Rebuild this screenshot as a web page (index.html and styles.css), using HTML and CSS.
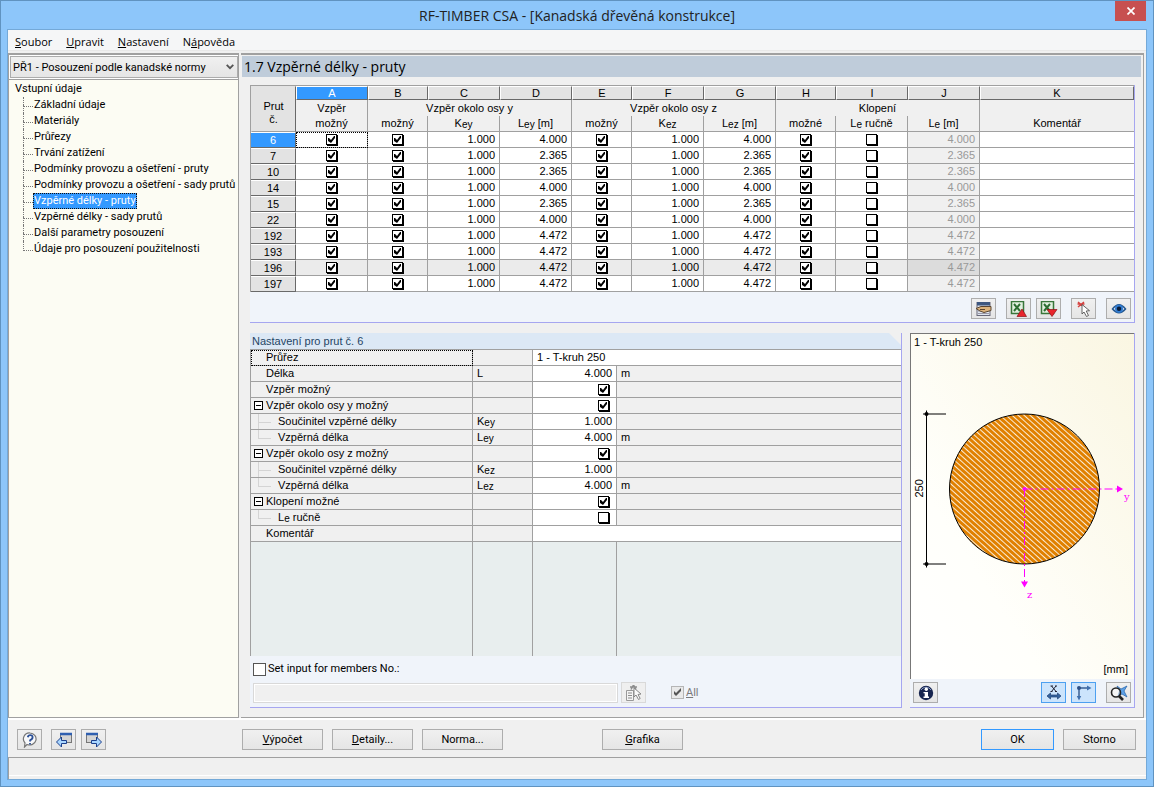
FILE: index.html
```html
<!DOCTYPE html>
<html lang="cs">
<head>
<meta charset="utf-8">
<title>RF-TIMBER CSA - [Kanadská dřevěná konstrukce]</title>
<link rel="stylesheet" href="styles.css">
</head>
<body>
<div class="window">
  <header class="titlebar">
    <h1 class="titlebar-text">RF-TIMBER CSA - [Kanadská dřevěná konstrukce]</h1>
    <button class="close" aria-label="Zavřít"><svg width="8" height="8" viewBox="0 0 8 8"><path d="M.5.5l7 7M7.5.5l-7 7" stroke="#fff" stroke-width="1.7"/></svg></button>
  </header>
  <div class="client">
    <nav class="menubar">
      <button class="menu-item"><u>S</u>oubor</button>
      <button class="menu-item"><u>U</u>pravit</button>
      <button class="menu-item"><u>N</u>astavení</button>
      <button class="menu-item">N<u>á</u>pověda</button>
    </nav>
    <div class="workspace">
      <aside class="sidebar">
        <div class="case-picker">
          <select class="case-select" aria-label="Případ"><option>PŘ1 - Posouzení podle kanadské normy</option></select>
          <svg class="case-arrow" width="8" height="6" viewBox="0 0 8 6"><path d="M.7.8L4 4.2 7.3.8" fill="none" stroke="#555" stroke-width="1.8"/></svg>
        </div>
        <div class="tree">
          <div class="tree-root">Vstupní údaje</div>
          <ul class="tree-list">
            <li><a href="#">Základní údaje</a></li>
            <li><a href="#">Materiály</a></li>
            <li><a href="#">Průřezy</a></li>
            <li><a href="#">Trvání zatížení</a></li>
            <li><a href="#">Podmínky provozu a ošetření - pruty</a></li>
            <li><a href="#">Podmínky provozu a ošetření - sady prutů</a></li>
            <li><a href="#" class="selected">Vzpěrné délky - pruty</a></li>
            <li><a href="#">Vzpěrné délky - sady prutů</a></li>
            <li><a href="#">Další parametry posouzení</a></li>
            <li><a href="#">Údaje pro posouzení použitelnosti</a></li>
          </ul>
        </div>
      </aside>
      <main class="main">
        <h2 class="heading">1.7 Vzpěrné délky - pruty</h2>
        <div class="content">
          <section class="panel">
            <table class="grid">
              <colgroup>
                <col class="c-no"><col class="c-72"><col class="c-60"><col class="c-72"><col class="c-72"><col class="c-60"><col class="c-72"><col class="c-72"><col class="c-60"><col class="c-72"><col class="c-72"><col>
              </colgroup>
              <thead>
                <tr class="letters">
                  <th rowspan="3" class="corner">Prut<br>č.</th>
                  <th class="active">A</th><th>B</th><th>C</th><th>D</th><th>E</th><th>F</th><th>G</th><th>H</th><th>I</th><th>J</th><th>K</th>
                </tr>
                <tr class="groups">
                  <th>Vzpěr</th><th colspan="3">Vzpěr okolo osy y</th><th colspan="3">Vzpěr okolo osy z</th><th colspan="3">Klopení</th><th></th>
                </tr>
                <tr class="names">
                  <th>možný</th>
                  <th>možný</th><th>K<small>ey</small></th><th>L<small>ey</small> [m]</th>
                  <th>možný</th><th>K<small>ez</small></th><th>L<small>ez</small> [m]</th>
                  <th>možné</th><th>L<small>e</small> ručně</th><th>L<small>e</small> [m]</th>
                  <th>Komentář</th>
                </tr>
              </thead>
              <tbody id="members"></tbody>
            </table>
            <div class="strip tools">
              <button class="icon-btn" aria-label="Upravit"><svg width="18" height="16" viewBox="0 0 18 16"><rect x="2" y="1.500" width="13" height="13" fill="#dfe5ee" stroke="#667"/><rect x="2" y="1" width="13" height="3.500" fill="#3d5780"/><path d="M3 12.500h11M3 10h3" stroke="#99a"/><path d="M1 7.500l5-2 10 0v4l-7 2-4-1.500z" fill="#dcb37c" stroke="#5a4530" stroke-width="1"/><path d="M5 8.500h5" stroke="#5a4530"/></svg></button>
              <button class="icon-btn gap-m" aria-label="Export do Excelu"><svg width="18" height="16" viewBox="0 0 18 16"><rect x="1.500" y=".5" width="12" height="12" fill="#e2f0df" stroke="#39763a" stroke-width="1.500"/><path d="M4 3l6 7M10 3l-6 7" stroke="#2d6e32" stroke-width="2"/><path d="M7 15.500L12 8l4.500 7.500z" fill="#e8242b" stroke="#8d1016" stroke-width=".7"/></svg></button>
              <button class="icon-btn gap-s" aria-label="Import z Excelu"><svg width="18" height="16" viewBox="0 0 18 16"><rect x="1.500" y=".5" width="12" height="12" fill="#e2f0df" stroke="#39763a" stroke-width="1.500"/><path d="M4 3l6 7M10 3l-6 7" stroke="#2d6e32" stroke-width="2"/><path d="M7 8.500h10L12 15.500z" fill="#e8242b" stroke="#8d1016" stroke-width=".7"/></svg></button>
              <button class="icon-btn gap-m" aria-label="Vybrat v grafice"><svg width="16" height="16" viewBox="0 0 16 16"><path d="M2 1l6 5M8 1L2 6M1.500 3h7" stroke="#d6413f" stroke-width="1.500"/><path d="M6 3.500v9.500l2-2 2.500 4.500 2-1-2.300-4.500 3.300-.3z" fill="#fff" stroke="#555" stroke-width=".9"/></svg></button>
              <button class="icon-btn gap-m" aria-label="Zobrazit"><svg width="16" height="12" viewBox="0 0 16 12"><path d="M1.500 6q6.500-8.500 13 0-6.500 7.500-13 0z" fill="#dce8f6" stroke="#24578f" stroke-width="1.500"/><circle cx="8" cy="5.800" r="4" fill="#2f7ad0"/><circle cx="8" cy="5.800" r="2.200" fill="#0b1d38"/></svg></button>
            </div>
          </section>
          <div class="lower">
            <section class="panel details">
              <h3 class="caption">Nastavení pro prut č. 6</h3>
              <table class="props">
                <colgroup><col class="p-name"><col class="p-sym"><col class="p-val"><col></colgroup>
                <tbody>
                  <tr><th class="focus">Průřez</th><td></td><td colspan="2" class="w">1 - T-kruh 250</td></tr>
                  <tr><th>Délka</th><td>L</td><td class="w num">4.000</td><td>m</td></tr>
                  <tr><th>Vzpěr možný</th><td></td><td class="w num"><input type="checkbox" class="tick" checked aria-label="Vzpěr možný"></td><td></td></tr>
                  <tr><th><button class="fold" aria-label="Sbalit"></button>Vzpěr okolo osy y možný</th><td></td><td class="w num"><input type="checkbox" class="tick" checked aria-label="Vzpěr okolo osy y možný"></td><td></td></tr>
                  <tr><th class="sub">Součinitel vzpěrné délky</th><td>K<small>ey</small></td><td class="w num">1.000</td><td></td></tr>
                  <tr><th class="sub last">Vzpěrná délka</th><td>L<small>ey</small></td><td class="w num">4.000</td><td>m</td></tr>
                  <tr><th><button class="fold" aria-label="Sbalit"></button>Vzpěr okolo osy z možný</th><td></td><td class="w num"><input type="checkbox" class="tick" checked aria-label="Vzpěr okolo osy z možný"></td><td></td></tr>
                  <tr><th class="sub">Součinitel vzpěrné délky</th><td>K<small>ez</small></td><td class="w num">1.000</td><td></td></tr>
                  <tr><th class="sub last">Vzpěrná délka</th><td>L<small>ez</small></td><td class="w num">4.000</td><td>m</td></tr>
                  <tr><th><button class="fold" aria-label="Sbalit"></button>Klopení možné</th><td></td><td class="w num"><input type="checkbox" class="tick" checked aria-label="Klopení možné"></td><td></td></tr>
                  <tr><th class="sub last">L<small>e</small> ručně</th><td></td><td class="w num"><input type="checkbox" class="tick" aria-label="Le ručně"></td><td></td></tr>
                  <tr><th>Komentář</th><td></td><td colspan="2" class="w"></td></tr>
                </tbody>
              </table>
              <div class="blank"><span class="b-name"></span><span class="b-sym"></span><span class="b-val"></span></div>
              <div class="strip members">
                <label class="check-line"><input type="checkbox" class="box">Set input for members No.:</label>
                <div class="member-row">
                  <input type="text" class="member-input" aria-label="Members No." disabled>
                  <button class="icon-btn dim" aria-label="Vybrat pruty" disabled><svg width="18" height="16" viewBox="0 0 18 16"><path d="M1.500 5.500h7v10h-7z" fill="#f4f4f4" stroke="#999"/><path d="M3 8h4M3 10.500h4M3 13h4" stroke="#8c8c8c"/><path d="M5 2h7M6 4.500L8.500 0 11 4.500" stroke="#8c8c8c" stroke-width="1.500" fill="none"/><path d="M9 3v9l2-2 2.500 4.500 1.700-1-2.200-4 3-.5z" fill="#fafafa" stroke="#888"/></svg></button>
                  <label class="check-line all"><input type="checkbox" class="box" checked disabled><span><u>A</u>ll</span></label>
                </div>
              </div>
            </section>
            <section class="panel preview">
              <div class="picture">
                <div class="picture-title">1 - T-kruh 250</div>
                <svg class="drawing" viewBox="0 0 223 308">
                  <defs><pattern id="hatch" width="4" height="4" patternUnits="userSpaceOnUse" patternTransform="rotate(42)"><rect width="4" height="4" fill="#e08000"/><rect width="4" height="1" fill="#faecd6"/></pattern></defs>
                  <circle cx="113.500" cy="138.500" r="75" fill="url(#hatch)" stroke="#000"/>
                  <path d="M15.500 60v157M12 63.500h23M12 213.500h23" stroke="#000" fill="none" stroke-width="1"/>
                  <circle cx="15.500" cy="63.500" r="2"/><circle cx="15.500" cy="213.500" r="2"/>
                  <text class="dim-text" transform="translate(12 147) rotate(-90)">250</text>
                  <path d="M113.500 138.500h93M113.500 138.500v93" stroke="#f0f" stroke-dasharray="8 3 2 3" fill="none"/>
                  <path d="M206 135l6 3.500-6 3.500zM110 231l3.500 6 3.500-6z" fill="#f0f"/><circle cx="113.500" cy="138.500" r="2" fill="#f0f"/>
                  <text class="axis-text" x="213" y="149">y</text><text class="axis-text" x="116" y="247">z</text>
                </svg>
                <div class="unit">[mm]</div>
              </div>
              <div class="strip tools preview-tools">
                <button class="icon-btn" aria-label="Informace"><svg width="16" height="16" viewBox="0 0 16 16"><circle cx="8" cy="8" r="7.200" fill="#17254f"/><path d="M3 5a6 6 0 0 1 10 0" stroke="#8fa0c8" fill="none"/><circle cx="8.300" cy="4.300" r="1.700" fill="#fff"/><path d="M5.500 7H10v4.500h1V13H5.500v-1.500h1.200V8.300H5.500z" fill="#fff"/></svg></button>
                <span class="spacer"></span>
                <button class="icon-btn on" aria-label="Kóty"><svg width="16" height="16" viewBox="0 0 16 16"><path d="M5.500 1l4.500 5.500M10 1L5.500 6.500M4.500 1h2.500M9 1h2M4.500 6.500h2M9 6.500h2" stroke="#223" stroke-width="1"/><path d="M1 11l3.500-3v2h7V8l3.500 3-3.500 3v-2h-7v2z" fill="#35639f" stroke="#1d3f72" stroke-width=".7"/></svg></button>
                <button class="icon-btn on gap-s" aria-label="Osy"><svg width="16" height="16" viewBox="0 0 16 16"><path d="M3 3h9M3 3v9" stroke="#3a5f92" stroke-width="1.500"/><path d="M11 .5L15.500 3 11 5.500zM.8 11L3 15.500 5.200 11z" fill="#3f6fae"/><circle cx="3" cy="3" r="2" fill="#2c4f86"/></svg></button>
                <button class="icon-btn gap-m" aria-label="Zobrazit vše"><svg width="18" height="16" viewBox="0 0 18 16"><path d="M7 1l4 3 6-3-3 5 3 6-5-3-4 2 1.500-5z" fill="#5da1e6" stroke="#1f5fa8" stroke-width=".7"/><circle cx="6" cy="7.500" r="4.500" fill="#fff" fill-opacity=".5" stroke="#222" stroke-width="1.600"/><path d="M9 11l4 4" stroke="#222" stroke-width="2.600"/></svg></button>
              </div>
            </section>
          </div>
        </div>
      </main>
    </div>
    <footer class="actions">
      <div class="actions-left">
        <button class="icon-btn" aria-label="Nápověda"><svg width="16" height="16" viewBox="0 0 16 16"><path d="M8 1a6.500 6 0 1 1-3 11.500L2.500 15l.5-4A6 6 0 0 1 8 1z" fill="#f7f8fa" stroke="#777" stroke-width="1.200"/><path d="M5.800 5.200q.4-2 2.500-2t2.300 1.800-2.500 3.200v1.300M8 11v1.500" fill="none" stroke="#2b4f96" stroke-width="1.800"/></svg></button>
        <button class="icon-btn gap-m" aria-label="Předchozí"><svg width="18" height="16" viewBox="0 0 18 16"><rect x="5.500" y="1.500" width="11" height="9" fill="#d4d4d4" stroke="#777"/><path d="M5 2h12" stroke="#2f5fb0" stroke-width="2.500"/><path d="M1.500 10l5-5v3.500h5v3h-5V15z" fill="#a9d6ff" stroke="#1b3f8c"/></svg></button>
        <button class="icon-btn gap-s" aria-label="Další"><svg width="18" height="16" viewBox="0 0 18 16"><rect x="1.500" y="1.500" width="11" height="9" fill="#d4d4d4" stroke="#777"/><path d="M1 2h12" stroke="#2f5fb0" stroke-width="2.500"/><path d="M16.500 10l-5-5v3.500h-5v3h5V15z" fill="#a9d6ff" stroke="#1b3f8c"/></svg></button>
      </div>
      <div class="actions-mid">
        <button class="btn"><u>V</u>ýpočet</button>
        <button class="btn"><u>D</u>etaily...</button>
        <button class="btn">Norma...</button>
        <button class="btn far"><u>G</u>rafika</button>
      </div>
      <div class="actions-right">
        <button class="btn short primary">OK</button>
        <button class="btn short">Storno</button>
      </div>
    </footer>
    <div class="statusbar"></div>
  </div>
</div>
<script src="members.js"></script>
</body>
</html>
```
FILE: styles.css
```css
* { box-sizing: border-box; }
body {
  margin: 0;
  font: 11px/16px Roboto, "Open Sans", sans-serif;
  color: #000;
}
button, input, select { font: inherit; color: inherit; }
button { padding: 0; }
small { font-size: 10px; position: relative; top: 1px; }
u { text-underline-offset: 1px; }

.window {
  min-height: 100vh;
  display: flex;
  flex-direction: column;
  padding: 0 7px 7px;
  background: #8dc6fa;
  border: 1px solid #6093c0;
}
.titlebar { display: flex; align-items: flex-start; height: 29px; position: relative; }
.titlebar-text {
  flex: 1;
  margin: 0;
  text-align: center;
  font: 14px/30px "Open Sans", sans-serif;
  color: #222;
}
.close {
  position: absolute;
  right: 0;
  top: 0;
  width: 31px;
  height: 20px;
  border: 0;
  background: #c75050;
}
.close svg { display: block; margin: auto; }
.client {
  flex: 1;
  display: flex;
  flex-direction: column;
  background: #f0f0f0;
  outline: 1px solid #74a9d8;
}
.menubar {
  display: flex;
  gap: 14px;
  height: 21px;
  padding: 0 7px;
  background: #f5f6f7;
  border-bottom: 1px solid #e8e8e8;
}
.menu-item { border: 0; background: none; font: 11px/20px "Open Sans", sans-serif; padding-top: 2px; }

.workspace { flex: 1; display: flex; gap: 2px; margin-top: 2px; border-bottom: 2px solid #fff; padding-right: 2px; }
.sidebar {
  width: 231px;
  display: flex;
  flex-direction: column;
  border: 1px solid #a0a0a0;
  border-top-width: 2px;
  background: #fff;
}
.case-picker { position: relative; margin: 1px 0 0 1px; }
.case-select {
  display: block;
  width: 100%;
  height: 22px;
  padding: 1px 2px 0;
  appearance: none;
  border: 1px solid #acacac;
  border-radius: 0;
  background: linear-gradient(#f0f0f0, #e5e5e5);
}
.case-arrow { position: absolute; right: 4px; top: 8px; }
.tree { flex: 1; margin-top: 1px; padding: 1px 0 0 5px; border-top: 1px solid #a0a0a0; background: #fcfcf3; white-space: nowrap; }
.tree-root { padding-left: 1px; }
.tree-list { list-style: none; margin: 0; padding: 0 0 0 9px; }
.tree-list li { position: relative; height: 16px; padding-left: 10px; }
.tree-list li::before { content: ""; position: absolute; left: 0; top: 0; width: 9px; height: 9px; border: dotted #777; border-width: 0 0 1px 1px; }
.tree-list li:not(:last-child)::after { content: ""; position: absolute; left: 0; top: 8px; height: 8px; border-left: 1px dotted #777; }
.tree-list a { display: inline-block; padding: 0 1px; color: inherit; text-decoration: none; }
.tree-list .selected { background: #3399ff; color: #fff; outline: 1px dotted #111; outline-offset: -1px; }

.main {
  flex: 1;
  min-width: 0;
  display: flex;
  flex-direction: column;
  border: solid #a0a0a0;
  border-width: 2px 1px 1px 0;
}
.heading {
  margin: 1px 2px 0 1px;
  padding: 1px 0 0 2px;
  background: #bfccda;
  font: 14px/20px "Open Sans", sans-serif;
}
.content { flex: 1; display: flex; flex-direction: column; gap: 10px; padding: 8px 8px 9px 9px; }
.panel { border: 1px solid #a6a6f0; border-width: 0 1px 1px 0; }
.grid, .props {
  width: 100%;
  table-layout: fixed;
  border-collapse: separate;
  border-spacing: 0;
  font-family: "Liberation Sans", Arial, sans-serif;
  background: #f0f0f0;
  border-left: 1px solid #a0a0a0;
}
.grid { border-top: 1px solid #a0a0a0; }
.c-no { width: 45px; }
.c-60 { width: 60px; }
.c-72 { width: 72px; }
.grid th, .grid td {
  height: 16px;
  padding: 0 4px;
  font-weight: 400;
  line-height: 15px;
  text-align: center;
  border: solid #a0a0a0;
  border-width: 0 1px 1px 0;
}
.grid tr > :last-child { border-right: 0; }
.grid .letters th {
  height: 14px;
  line-height: 12px;
  background: #e3e3e3;
  border: 1px solid #fff;
  border-right-color: #696969;
  border-bottom-color: #696969;
}
.grid .letters .active { background: #3399ff; color: #fff; }
.grid .letters .corner { padding-top: 8px; line-height: 13px; border-color: #e3e3e3 #696969 #a0a0a0 #e3e3e3; }
.grid .groups th { border-bottom: 0; }
.grid td { background: #fff; }
.grid td.num { text-align: right; }
.grid td:nth-child(11) { background: #f0f0f0; color: #999; }
.grid tbody th {
  background: #e3e3e3;
  border-top: 1px solid #fff;
  border-right-color: #696969;
  border-bottom-color: #696969;
  line-height: 13px;
}
.grid tbody .current th { background: #3399ff; color: #fff; }
.grid .current td:nth-child(2) { outline: 1px dotted #000; outline-offset: -1px; }
.grid .shade td { background: #ebebeb; }
.grid .shade td:nth-child(11) { background: #dcdcdc; }

.tick {
  appearance: none;
  display: block;
  width: 11px;
  height: 11px;
  margin: 0 auto;
  border: 1px solid #000;
  box-shadow: 1px 1px 0 #000;
  background: #fff;
}
.num .tick { margin: 0 3px 0 auto; }
.tick:checked::before {
  content: "";
  display: block;
  width: 9px;
  height: 9px;
  background: #000;
  clip-path: polygon(7px 1px, 8px 1px, 8px 3px, 4px 8px, 1px 6px, 1px 3px, 2px 3px, 4px 5px);
}

.strip { background: #f0f4fa; }
.tools { display: flex; justify-content: flex-end; padding: 6px 3px 3px; }
.icon-btn {
  display: flex;
  align-items: center;
  justify-content: center;
  width: 25px;
  height: 21px;
  border: 1px solid #adadad;
  background: linear-gradient(#f0f0f0, #e5e5e5);
}
.icon-btn.on { border-color: #4da0f0; background: #cce4fc; }
.icon-btn.dim { border-color: #d9d9d9; background: #efefef; }
.gap-s { margin-left: 5px; }
.gap-m { margin-left: 10px; }
.spacer { flex: 1; }

.lower { flex: 1; display: flex; gap: 8px; }
.details { flex: 1; display: flex; flex-direction: column; }
.caption {
  margin: 0;
  padding-left: 2px;
  background: #dce8f5;
  color: #1f4565;
  font: 11px/16px "Liberation Sans", Arial, sans-serif;
  clip-path: polygon(0 0, calc(100% - 12px) 0, 100% 12px, 100% 100%, 0 100%);
}
.props { border-top: 1px solid #a0a0a0; }
.p-name { width: 222px; }
.p-sym { width: 60px; }
.p-val { width: 84px; }
.props th, .props td {
  position: relative;
  height: 16px;
  padding: 0 4px;
  text-align: left;
  font-weight: 400;
  line-height: 15px;
  border: solid #a0a0a0;
  border-width: 0 1px 1px 0;
}
.props tr > :last-child { border-right: 0; }
.props th { padding-left: 15px; }
.props .w { background: #fff; }
.props .num { text-align: right; }
.props .focus { outline: 1px dotted #000; outline-offset: -1px; }
.props .sub { padding-left: 27px; }
.props .sub::before { content: ""; position: absolute; left: 7px; top: 0; width: 12px; height: 8px; border: solid #d4d4d4; border-width: 0 0 1px 1px; }
.props .sub:not(.last)::after { content: ""; position: absolute; left: 7px; top: 7px; height: 8px; border-left: 1px solid #d4d4d4; }
.fold { position: absolute; left: 3px; top: 3px; width: 9px; height: 9px; border: 1px solid #000; background: linear-gradient(#000, #000) center / 5px 1px no-repeat #fff; }
.blank { flex: 1; display: flex; background: #e8eeee; border-left: 1px solid #a0a0a0; }
.blank span { border-right: 1px solid #a0a0a0; }
.b-name { width: 222px; }
.b-sym { width: 60px; }
.b-val { width: 84px; }
.members { padding: 5px 3px 4px; }
.check-line { display: flex; align-items: center; gap: 2px; }
.box {
  appearance: none;
  width: 13px;
  height: 13px;
  margin: 0;
  border: 1px solid #555;
  background: #fff;
}
.box:disabled { border-color: #b5b5b5; background: #e9e9e9; }
.box:checked::before { content: ""; display: block; width: 11px; height: 11px; background: #555; clip-path: polygon(2px 4px, 4px 6px, 9px 1px, 9px 4px, 4px 9px, 2px 7px); }
.member-row { display: flex; align-items: center; margin-top: 5px; }
.member-input { flex: 1; min-width: 0; height: 20px; margin-right: 3px; border: 1px solid #d9d9d9; background: #f0f0f0; box-shadow: inset 0 0 0 1px #fff; }
.all { width: 227px; margin-left: 25px; color: #7a7a7a; }

.preview { width: 225px; display: flex; flex-direction: column; }
.picture {
  flex: 1;
  display: flex;
  flex-direction: column;
  border: solid #777;
  border-width: 1px 0 0 1px;
  background: linear-gradient(to top right, #fff, #fffffb 30%, #faf6e2);
  font-family: "Liberation Sans", Arial, sans-serif;
}
.picture-title { padding-left: 3px; }
.drawing { flex: 1; display: block; width: 100%; min-height: 0; }
.unit { padding-right: 6px; text-align: right; line-height: 20px; }
.dim-text { font: 11px "Liberation Sans", Arial, sans-serif; }
.axis-text { font: 10px "DejaVu Serif", serif; fill: #f0f; }
.preview-tools { padding-top: 3px; padding-bottom: 4px; }

.actions { display: flex; align-items: center; height: 37px; padding: 2px 10px 0 9px; }
.actions-left { display: flex; width: 225px; }
.actions-left .gap-m { margin-left: 9px; }
.actions-mid { flex: 1; display: flex; gap: 9px; }
.far { margin-left: 90px; }
.actions-right { display: flex; gap: 9px; }
.btn { width: 81px; height: 21px; padding-top: 1px; border: 1px solid #adadad; background: linear-gradient(#f0f0f0, #e5e5e5); }
.short { width: 73px; }
.primary { border-color: #3399ff; }
.statusbar { height: 22px; border: 1px solid #a0a0a0; border-width: 1px 0 0 1px; box-shadow: inset 0 -3px 0 #f0f0f0, inset 0 -4px 0 #fff; }
```
FILE: members.js
```js
const members = [
  [6, "4.000"], [7, "2.365"], [10, "2.365"], [14, "4.000"], [15, "2.365"],
  [22, "4.000"], [192, "4.472"], [193, "4.472"], [196, "4.472"], [197, "4.472"]
];

const tick = (label, on) =>
  `<td><input type="checkbox" class="tick" aria-label="${label}"${on ? " checked" : ""}></td>`;
const num = (value) => `<td class="num">${value}</td>`;

document.getElementById("members").innerHTML = members.map(([no, length]) => {
  const state = no === 6 ? "current" : no === 196 ? "shade" : "";
  return `<tr class="${state}"><th>${no}</th>` +
    tick(`Vzpěr možný, prut ${no}`, true) +
    tick(`Vzpěr okolo osy y, prut ${no}`, true) + num("1.000") + num(length) +
    tick(`Vzpěr okolo osy z, prut ${no}`, true) + num("1.000") + num(length) +
    tick(`Klopení možné, prut ${no}`, true) +
    tick(`Le ručně, prut ${no}`, false) + num(length) + "<td></td></tr>";
}).join("");
```
